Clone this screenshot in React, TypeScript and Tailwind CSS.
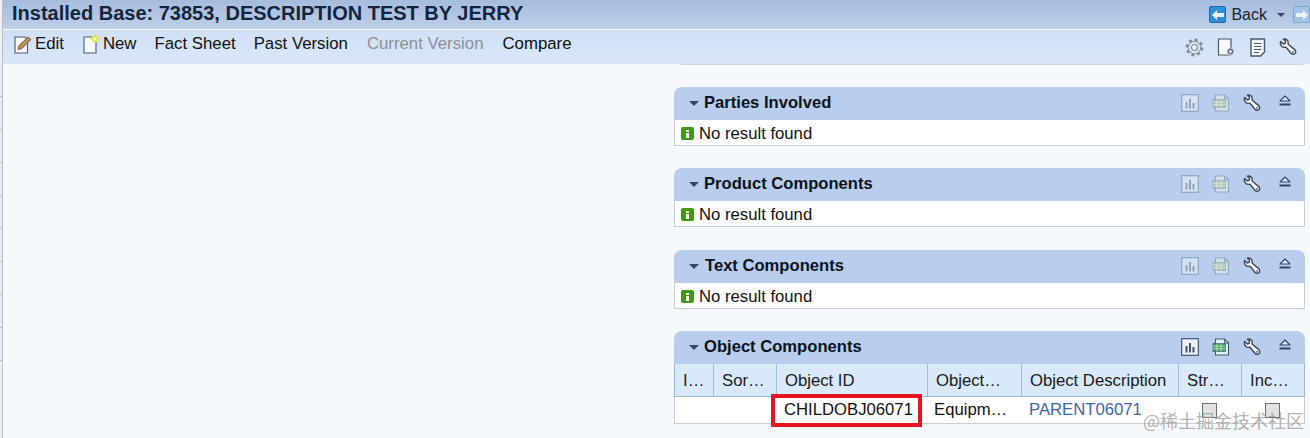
function Wrench() {
  return (
    <svg width="18" height="18" viewBox="0 0 18 18" fill="none">
      <path
        d="M1.6 3.4 4.4 6 6.4 5.2 6.4 2.8 4.4 1.2C6.8.4 9.2 1.8 9.2 4.6L9 6 15.4 11.4C17 12.8 17 14.6 16 15.6 15 16.6 13.2 16.6 12 15.2L7 9.2 5 9.4C2.4 9.4.8 6.2 1.6 3.4Z"
        fill="#f6f8fc"
        stroke="#3f4a59"
        strokeWidth="1.4"
        strokeLinejoin="round"
      />
      <circle cx="14" cy="13.8" r="0.9" fill="#3f4a59" />
    </svg>
  )
}

function ChartIcon({ active }: { active?: boolean }) {
  const c = active ? '#3a5578' : '#8ea6be'
  return (
    <svg width="18" height="18" viewBox="0 0 18 18" fill="none">
      <rect x="0.7" y="0.7" width="16.6" height="16.6" fill={active ? '#eef3fa' : '#d6e1f2'} stroke={c} strokeWidth="1.2" />
      <rect x="4.5" y="8" width="2" height="6.5" fill={c} />
      <rect x="8" y="5" width="2" height="9.5" fill={c} />
      <rect x="11.5" y="9" width="2" height="5.5" fill={c} />
    </svg>
  )
}

function ExportIcon({ active }: { active?: boolean }) {
  const line = active ? '#44586f' : '#93a7b8'
  const fill = active ? '#3fa35a' : '#a8c4b2'
  return (
    <svg width="18" height="18" viewBox="0 0 18 18" fill="none">
      <path d="M3.5 1H12.5L16.5 5V17H3.5Z" fill={active ? '#e9eff6' : '#d5e0ee'} stroke={line} strokeWidth="1.1" />
      <path d="M12.5 1V5H16.5" stroke={line} strokeWidth="0.9" />
      <rect x="1" y="5.5" width="12.5" height="8" fill={fill} stroke={line} strokeWidth="0.7" />
      <path d="M1 8.2H13.5M1 10.8H13.5M5 5.5V13.5M9 5.5V13.5" stroke="#e6f4ea" strokeWidth="0.7" />
    </svg>
  )
}

function EjectIcon() {
  return (
    <svg width="14" height="12" viewBox="0 0 14 12" fill="none">
      <path d="M7 1 12 6H2Z" fill="#dfe8f6" stroke="#2f4668" strokeWidth="1.1" strokeLinejoin="round" />
      <rect x="1.5" y="8.5" width="11" height="2" fill="#2f4668" />
    </svg>
  )
}

function InfoIcon() {
  return (
    <span className="flex h-[13px] w-[13px] flex-col items-center justify-center gap-[1px] rounded-[2px] bg-[#3f9a12]">
      <span className="h-[2px] w-[3px] bg-white" />
      <span className="h-[5px] w-[3px] bg-white" />
    </span>
  )
}

function EditIcon() {
  return (
    <svg width="20" height="20" viewBox="0 0 20 20" fill="none">
      <path d="M2 3H12L14.5 5.5V19H2Z" fill="#f4f6f9" stroke="#4d5a6a" strokeWidth="1.1" />
      <path d="M5 15.5 6 11.5 15 3 18 5.5 9 14.5Z" fill="#b98d55" stroke="#5e4a33" strokeWidth="0.8" />
    </svg>
  )
}

function NewIcon() {
  return (
    <svg width="20" height="20" viewBox="0 0 20 20" fill="none">
      <path d="M2 3H12L14 5V19H2Z" fill="#f7f9fc" stroke="#4d5a6a" strokeWidth="1.1" />
      <circle cx="13" cy="5" r="3.6" fill="#e9ee55" />
      <path d="M13 .5V9.5M8.5 5H17.5" stroke="#c8d838" strokeWidth="1.2" />
      <circle cx="13" cy="5" r="1.6" fill="#fffde0" />
    </svg>
  )
}

function GearIcon() {
  return (
    <svg width="19" height="19" viewBox="0 0 19 19" fill="none">
      <circle cx="9.5" cy="9.5" r="7.6" stroke="#7f8a96" strokeWidth="2.6" strokeDasharray="3 2.97" />
      <circle cx="9.5" cy="9.5" r="6.2" fill="#dfe7f3" stroke="#7f8a96" strokeWidth="1" />
      <circle cx="9.5" cy="9.5" r="3" fill="#f4f7fb" stroke="#7f8a96" strokeWidth="1.2" />
    </svg>
  )
}

function DocGearIcon() {
  return (
    <svg width="19" height="19" viewBox="0 0 19 19" fill="none">
      <path d="M1.5 1H14V17H1.5Z" fill="#f6f8fb" stroke="#4b5866" strokeWidth="1.2" />
      <circle cx="13.5" cy="13.5" r="3.6" fill="#6f7a86" stroke="#e6edf7" strokeWidth="0.8" />
      <circle cx="13.5" cy="13.5" r="1.2" fill="#fff" />
    </svg>
  )
}

function ListDocIcon() {
  return (
    <svg width="17" height="19" viewBox="0 0 17 19" fill="none">
      <path d="M2 1H15.5V14L11.5 18H2Z" fill="#f6f8fb" stroke="#4b5866" strokeWidth="1.4" />
      <path d="M5 5.5H12.5M5 8.5H12.5M5 11.5H12.5M5 14.5H10" stroke="#4b5866" strokeWidth="1.2" />
    </svg>
  )
}

function BackIcon() {
  return (
    <span className="flex h-[17px] w-[17px] items-center justify-center rounded-[2px] border border-[#1e6aa8] bg-[#2f8fd6]">
      <svg width="12" height="10" viewBox="0 0 12 10">
        <path d="M0 5 5 0V3H12V7H5V10Z" fill="#e8f3fb" />
      </svg>
    </span>
  )
}

function ForwardIcon() {
  return (
    <span className="flex h-[17px] w-[17px] shrink-0 items-center justify-center rounded-[2px] border border-[#7fa8d0] bg-[#a3c4e6]">
      <svg width="12" height="10" viewBox="0 0 12 10">
        <path d="M12 5 7 0V3H0V7H7V10Z" fill="#e8f3fb" />
      </svg>
    </span>
  )
}

function Caret() {
  return <span className="h-0 w-0 border-x-[5px] border-t-[5px] border-x-transparent border-t-[#33496b]" />
}

function PanelHeader({ title, active, titleGap }: { title: string; active?: boolean; titleGap?: string }) {
  return (
    <div className="flex h-[33px] items-center rounded-t-[8px] bg-[#b9cdee] pl-[15px] pr-[13px]">
      <Caret />
      <span className={`${titleGap ?? 'ml-[5px]'} text-[16.6px] font-bold text-[#0c1420]`}>{title}</span>
      <div className="mb-[2px] ml-auto flex items-center">
        <ChartIcon active={active} />
        <span className="ml-[13px]"><ExportIcon active={active} /></span>
        <span className="ml-[13px]"><Wrench /></span>
        <span className="ml-[17px] mb-[3px]"><EjectIcon /></span>
      </div>
    </div>
  )
}

function EmptyPanel({ title, titleGap }: { title: string; titleGap?: string }) {
  return (
    <section>
      <PanelHeader title={title} titleGap={titleGap} />
      <div className="flex h-[26px] items-center gap-[5px] border-x border-b border-[#c6ced9] bg-white pl-[6px] pt-[2px] text-[16.7px] text-[#111]">
        <InfoIcon />
        No result found
      </div>
    </section>
  )
}

const columns = [
  { label: 'I…', w: 'w-[39px]' },
  { label: 'Sor…', w: 'w-[63px]' },
  { label: 'Object ID', w: 'w-[151px]' },
  { label: 'Object…', w: 'w-[94px]' },
  { label: 'Object Description', w: 'w-[157px]' },
  { label: 'Str…', w: 'w-[63px]' },
  { label: 'Inc…', w: 'flex-1' },
]

function Checkbox() {
  return <span className="block h-[15px] w-[15px] border border-[#6e6e6e] bg-[#e2e2e2]" />
}

function ObjectPanel() {
  return (
    <section className="relative">
      <PanelHeader title="Object Components" active />
      <div className="flex h-[33px] border-x border-b border-[#9db9de] bg-[#d7e9fb] text-[16.7px] text-[#1a1a1a]">
        {columns.map((c, i) => (
          <div
            key={c.label}
            className={`${c.w} flex items-center pl-[8px] pt-[1px] ${i < columns.length - 1 ? 'border-r border-[#a3bcdf]' : ''}`}
          >
            {c.label}
          </div>
        ))}
      </div>
      <div className="flex h-[27px] items-center border-x border-b border-[#c6ced9] bg-white text-[16.7px] text-[#111]">
        <div className="w-[39px]" />
        <div className="w-[63px]" />
        <div className="w-[151px] pl-[7px]">CHILDOBJ06071</div>
        <div className="w-[94px] pl-[6px]">Equipm…</div>
        <div className="w-[157px] pl-[7px] text-[#3c66b4]">PARENT06071</div>
        <div className="w-[63px] pl-[23px]"><Checkbox /></div>
        <div className="flex-1 pl-[23px]"><Checkbox /></div>
      </div>
      <div className="absolute left-[97px] top-[63px] h-[33px] w-[151px] border-[4px] border-[#e5141f]" />
      <div className="absolute left-[469px] top-[76px] font-['Noto_Sans_CJK_SC',sans-serif] text-[18px] text-[#8f8f8f]/70">
        @稀土掘金技术社区
      </div>
    </section>
  )
}

const stripRows = [0, 1, 2, 3, 4, 5, 6, 7, 8]

export default function App() {
  return (
    <div className="flex h-[438px] w-[1310px] overflow-hidden bg-[#f5f8fd] font-['Liberation_Sans',Arial,sans-serif]">
      <div className="flex w-[3px] shrink-0 flex-col border-r border-[#b9bfc9] bg-[#eef0f6] pt-[64px]">
        {stripRows.map(r => (
          <div key={r} className="h-[33px] shrink-0 border-b border-[#b9bfc9] bg-[#e6e9f4]" />
        ))}
      </div>
      <div className="flex min-w-0 flex-1 flex-col">
        <header className="flex h-[29px] items-center bg-gradient-to-b from-[#a6bcdc] to-[#bdd0ea] pl-[9px]">
          <h1 className="mb-[4px] text-[20px] font-bold text-[#14263f]">Installed Base: 73853, DESCRIPTION TEST BY JERRY</h1>
          <div className="ml-auto flex items-center text-[16px] text-[#1a2230]">
            <BackIcon />
            <span className="ml-[5px]">Back</span>
            <span className="ml-[10px] mr-[8px] block h-0 w-0 border-x-[4px] border-t-[4px] border-x-transparent border-t-[#33496b]" />
            <ForwardIcon />
          </div>
        </header>
        <nav className="mt-[1px] flex h-[34px] items-center bg-gradient-to-b from-[#d0e0f6] to-[#dae7f9] pl-[10px] pr-[13px] text-[16.8px] text-[#111]">
          <div className="mb-[7px] flex items-center">
            <span className="flex items-center"><EditIcon /><span className="ml-[2px]">Edit</span></span>
            <span className="ml-[18px] flex items-center"><NewIcon /><span className="ml-[1px]">New</span></span>
            <span className="ml-[18px]">Fact Sheet</span>
            <span className="ml-[18px]">Past Version</span>
            <span className="ml-[19px] text-[#8c9097]">Current Version</span>
            <span className="ml-[19px]">Compare</span>
          </div>
          <div className="ml-auto flex items-center gap-[13px]">
            <GearIcon />
            <DocGearIcon />
            <ListDocIcon />
            <Wrench />
          </div>
        </nav>
        <main className="flex flex-1 flex-col pl-[671px] pr-[5px]">
          <div className="ml-[6px] mr-[2px] h-[1px] bg-[#ced6e2]" />
          <div className="mt-[22px] flex flex-col gap-[22px]">
            <EmptyPanel title="Parties Involved" />
            <EmptyPanel title="Product Components" />
            <div className="mt-[1px]"><EmptyPanel title="Text Components" titleGap="ml-[6px]" /></div>
            <ObjectPanel />
          </div>
        </main>
      </div>
    </div>
  )
}
